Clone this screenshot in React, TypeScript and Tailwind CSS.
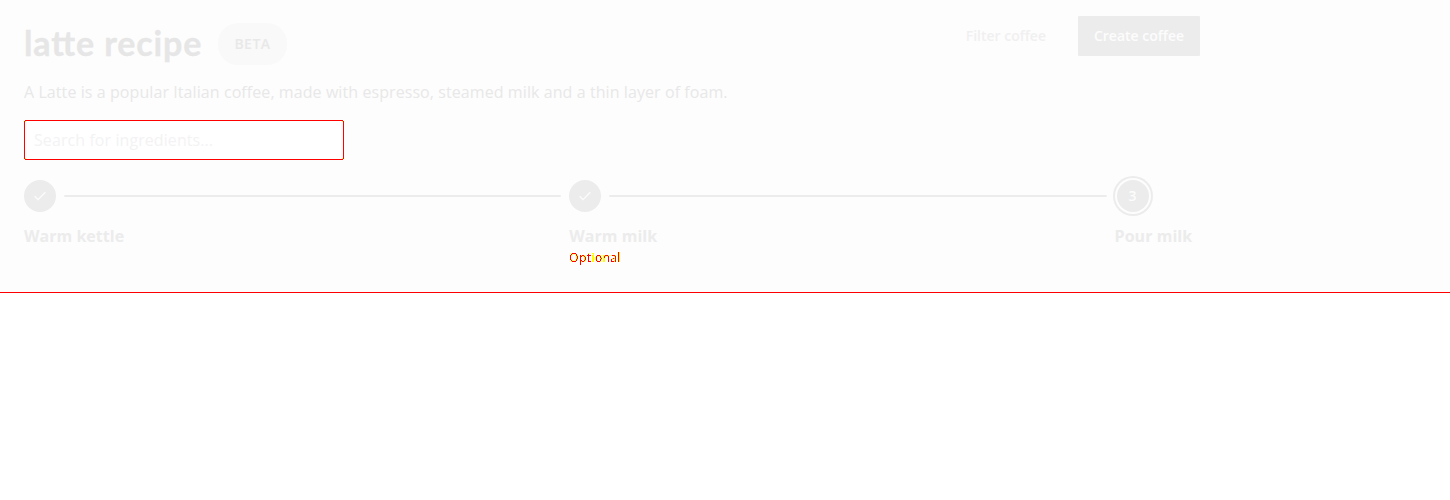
import React from "react";

function Check() {
  return (
    <svg width="16" height="16" viewBox="0 0 16 16" fill="none" stroke="#fcfcfc" strokeWidth="1.3">
      <path d="M2.7 8.3 6 11.6 13.3 4.3" />
    </svg>
  );
}

function Line() {
  return <div className="mx-2 h-0.5 flex-1 rounded-full bg-[#ececec]" />;
}

export default function App() {
  return (
    <main className="min-h-[500px] bg-white font-['Open_Sans',sans-serif] text-base tracking-[0.08px] text-[#ececec]">
      <svg className="absolute size-0" aria-hidden="true">
        <filter id="edge" colorInterpolationFilters="sRGB" x="0%" y="0%" width="100%" height="100%">
          <feColorMatrix in="SourceGraphic" type="matrix" values="0 0 0 0 1  0 0 0 1 0  0 0 0 0 0  0 0 0 0 1" result="coverage" />
          <feComponentTransfer in="coverage" result="tone">
            <feFuncG type="discrete" tableValues="1 1 1 1 1 0 0 0 0 0" />
          </feComponentTransfer>
          <feComponentTransfer in="SourceGraphic" result="mask">
            <feFuncA type="discrete" tableValues="0 0 1 1 1 1 1 1 1 1" />
          </feComponentTransfer>
          <feComposite in="tone" in2="mask" operator="in" />
        </filter>
      </svg>
      <section className="h-[293px] border-b border-[#ff0000] bg-[#fdfdfd]">
        <div className="flex w-[1224px] items-start justify-between pl-6 pr-6 pt-4">
          <div>
            <div className="flex h-14 items-center">
              <h1 className="w-[178px] whitespace-nowrap pb-0.5 font-['Lato',sans-serif] text-[34px] font-bold leading-[46px] tracking-[0.9px] text-[#e6e6e6] [-webkit-text-stroke:0.3px_#e6e6e6] [font-feature-settings:'liga'_1]">latte recipe</h1>
              <span className="ml-4 flex h-[42px] w-[69px] items-center justify-center rounded-[20px] bg-[#f9f9f9] text-sm font-semibold tracking-[0.5px] text-[#e8e8e8]">BETA</span>
            </div>
            <p className="mt-2 whitespace-nowrap leading-6 text-[#e8e8e8]">A Latte is a popular Italian coffee, made with espresso, steamed milk and a thin layer of foam.</p>
          </div>
          <div className="flex gap-4 text-sm font-semibold tracking-normal">
            <button className="h-10 px-4 text-[#f0f0f0]">Filter coffee</button>
            <button className="h-10 w-[122px] rounded-[1px] bg-[#ececec] text-[#fcfcfc]">Create coffee</button>
          </div>
        </div>
        <div className="relative ml-6 mt-4 h-10 w-80">
          <input
            className="block h-10 w-80 rounded-[3px] bg-white px-2.5 text-base tracking-[0.08px] placeholder:text-[#f3f3f3] placeholder:opacity-100"
            placeholder="Search for ingredients..."
          />
          <div className="pointer-events-none absolute inset-0 rounded-[2px] border border-black [filter:url(#edge)]" />
        </div>
        <ol className="mt-5 flex pl-6 font-bold tracking-[0.03px]">
          <li className="w-[545.3px]">
            <div className="flex items-center">
              <span className="flex size-8 items-center justify-center rounded-full bg-[#ececec]"><Check /></span>
              <Line />
            </div>
            <div className="mt-3 leading-6">Warm kettle</div>
          </li>
          <li className="w-[545.3px]">
            <div className="flex items-center">
              <span className="flex size-8 items-center justify-center rounded-full bg-[#ececec]"><Check /></span>
              <Line />
            </div>
            <div className="mt-3 leading-6">Warm milk</div>
            <div className="w-fit text-xs font-normal leading-5 tracking-[0.4px] text-black [filter:url(#edge)]">Optional</div>
          </li>
          <li>
            <span className="ml-0.5 flex size-8 items-center justify-center rounded-full bg-[#ececec] text-sm font-semibold text-[#fcfcfc] shadow-[0_0_0_2px_#fdfdfd,0_0_0_4px_#ececec]">3</span>
            <div className="mt-3 leading-6">Pour milk</div>
          </li>
        </ol>
      </section>
    </main>
  );
}
